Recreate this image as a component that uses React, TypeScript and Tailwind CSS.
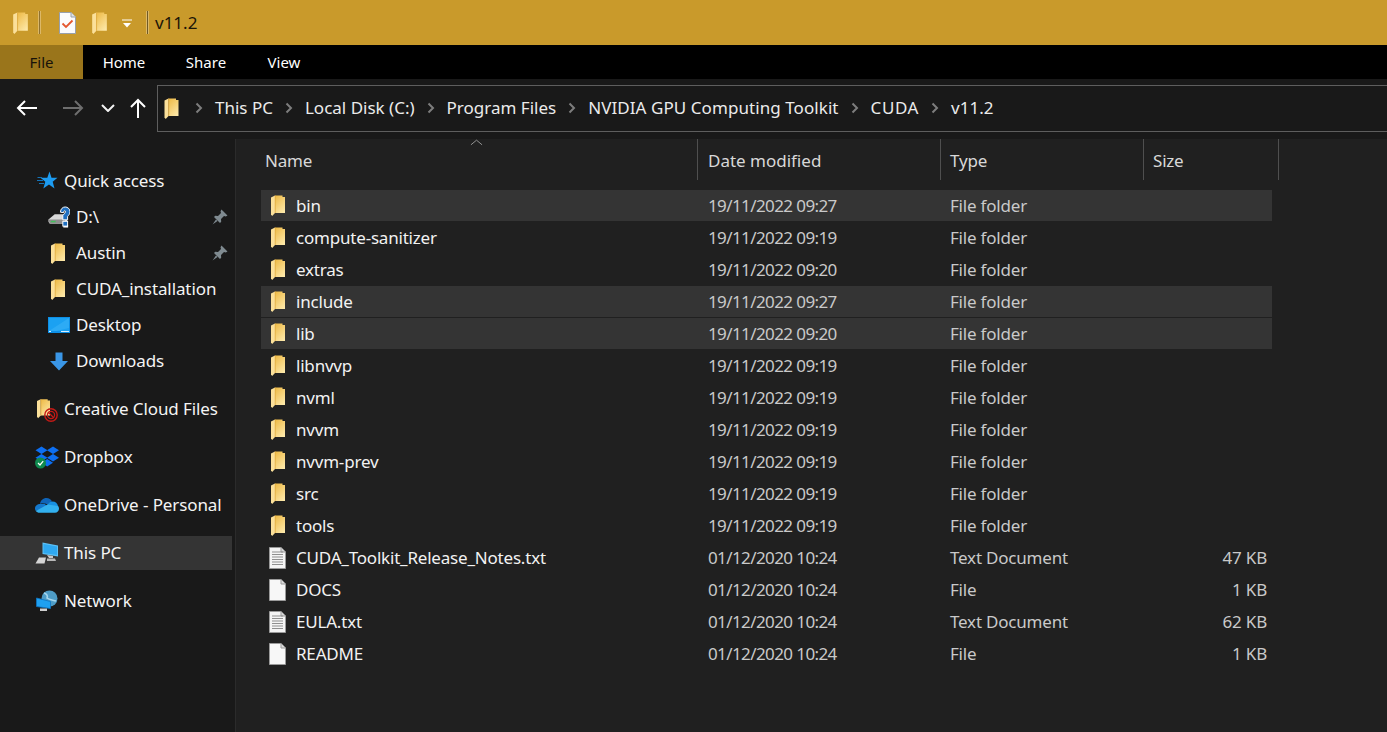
const FONT = "font-['Noto_Sans',sans-serif]";

function Folder({ className = "w-[14px] h-[21px]" }: { className?: string }) {
  return (
    <svg viewBox="0 0 14 21" className={className}>
      <defs>
        <linearGradient id="fold" x1="0.2" y1="0" x2="0.8" y2="1">
          <stop offset="0" stopColor="#efbd4c" />
          <stop offset="1" stopColor="#fde8a8" />
        </linearGradient>
      </defs>
      <path d="M4 0.5H11.5V2H14V18H4Z" fill="url(#fold)" />
      <path d="M0 2.5L4 0.5V18L1.2 21L0 19.5Z" fill="#fbe09a" />
      <path d="M4.2 0.5V18" fill="none" stroke="#dca63a" strokeWidth="0.7" />
    </svg>
  );
}

function TextFile() {
  return (
    <svg viewBox="0 0 17 22" className="w-[17px] h-[22px]">
      <path d="M0.5 0.5H12L16.5 5V21.5H0.5Z" fill="#f4f4f4" stroke="#9a9a9a" />
      <path d="M12 0.5V5H16.5" fill="#d8d8d8" stroke="#9a9a9a" />
      {[5, 7.5, 10, 12.5, 15, 17.5].map((y) => (
        <path key={y} d={`M3 ${y}H14`} stroke="#8f8f8f" strokeWidth="1" />
      ))}
    </svg>
  );
}

function BlankFile() {
  return (
    <svg viewBox="0 0 17 22" className="w-[17px] h-[22px]">
      <path d="M0.5 0.5H12L16.5 5V21.5H0.5Z" fill="#f7f7f7" stroke="#9a9a9a" />
      <path d="M12 0.5V5H16.5" fill="#dcdcdc" stroke="#9a9a9a" />
    </svg>
  );
}

function Pin() {
  return (
    <svg viewBox="0 0 16 16" className="w-4 h-4">
      <path d="M9.5 0.5L15.5 6.5L13.8 7.5L12 7L9 10L9.2 12.8L8 14L2 8L3.2 6.8L6 7L9 4L8.5 2.2Z" fill="#7f8a90" />
      <path d="M4 10.5L0.5 15.5L5.5 12Z" fill="#7f8a90" />
    </svg>
  );
}

function Star() {
  return (
    <svg viewBox="0 0 21 20" className="w-[21px] h-[20px]">
      <path d="M12.5 0.5L14.5 6.8H20.5L15.7 10.7L17.5 17.5L12 13.5L6.3 17.5L8.3 10.7L3.5 6.8H10.3Z" fill="#1d9bf0" />
      <path d="M0.5 6.5H5M0 9.5H6M2 12.5H7" stroke="#1473b8" strokeWidth="1" />
    </svg>
  );
}

function Drive() {
  return (
    <svg viewBox="0 0 23 22" className="w-[23px] h-[22px]">
      <path d="M0.5 13.5L7 8H20V15L18 18H2L0.5 16Z" fill="#d9d9d9" />
      <path d="M0.5 13.5H18V18H2Z" fill="#8e8e8e" />
      <rect x="3" y="15" width="5" height="1.5" fill="#42c05a" />
      <path d="M16 19.5H21V22H16Z" fill="#fff" />
      <path d="M13 6C13 2.5 15.5 0.5 18 0.5C20.5 0.5 23 2.5 23 5.5C23 8 21.5 9 20.5 10.5V14H15.5V9.5C16.5 8 18.2 7 18.2 5.3C18.2 4.4 17.2 4 16.6 5L16.5 6.5Z" fill="#1f6fc0" stroke="#fff" strokeWidth="1" />
      <rect x="15.5" y="15.5" width="5" height="5" fill="#1f6fc0" stroke="#fff" strokeWidth="1" />
    </svg>
  );
}

function DesktopIcon() {
  return (
    <svg viewBox="0 0 22 16" className="w-[22px] h-4">
      <rect x="0" y="0" width="22" height="16" fill="#0d8fe6" />
      <path d="M1 1H21V14H1Z" fill="#1ba1f2" />
      <path d="M21 1V11L8 14H1Z" fill="#3db5f7" opacity="0.55" />
      <path d="M1 14.5H3M13 14.5H21" stroke="#d8efff" strokeWidth="1" />
    </svg>
  );
}

function DownloadArrow() {
  return (
    <svg viewBox="0 0 18 19" className="w-[18px] h-[19px]">
      <path d="M5.5 0.5H12.5V9H18L9 18.5L0 9H5.5Z" fill="#3a96e6" />
    </svg>
  );
}

function CreativeCloud() {
  return (
    <div className="relative w-[20px] h-[23px]">
      <Folder className="w-[13px] h-[21px]" />
      <svg viewBox="0 0 14 14" className="absolute right-[-1px] bottom-[-1px] w-[14px] h-[14px]">
        <circle cx="7" cy="7" r="6.2" fill="none" stroke="#c41a16" strokeWidth="1.4" />
        <circle cx="7" cy="7" r="3.6" fill="none" stroke="#c41a16" strokeWidth="1.2" />
        <path d="M4 4L10 10" stroke="#c41a16" strokeWidth="1.2" />
      </svg>
    </div>
  );
}

function Dropbox() {
  return (
    <svg viewBox="0 0 24 23" className="w-6 h-[23px]">
      <path d="M6.5 0.5L12.5 4.2L6.5 8L0.5 4.2Z" fill="#0d6ff2" />
      <path d="M18 0.5L24 4.2L18 8L12 4.2Z" fill="#0d6ff2" />
      <path d="M6.5 8L12.5 11.8L6.5 15.5L0.5 11.8Z" fill="#0d6ff2" />
      <path d="M18 8L24 11.8L18 15.5L12 11.8Z" fill="#0d6ff2" />
      <path d="M12.2 13L18 16.8L12.2 20.5L6.5 16.8Z" fill="#0d6ff2" />
      <circle cx="5.5" cy="17" r="5.5" fill="#0f8a4f" />
      <path d="M3 17L5 19L8.2 15.2" fill="none" stroke="#fff" strokeWidth="1.2" />
    </svg>
  );
}

function OneDrive() {
  return (
    <svg viewBox="0 0 24 16" className="w-6 h-4">
      <path d="M5 7C5.5 3.5 8 1 11.5 1C14 1 16 2.2 17 4.5C15 5 13.5 6 12.5 7.5L9 6C7.5 6 6 6.3 5 7Z" fill="#0f64b8" />
      <path d="M12.5 7.5C13.5 5.5 15.5 4.5 17.5 4.5C20.5 4.5 22.5 6.5 23 9L15 11Z" fill="#1890e0" />
      <path d="M5 7C2 7 0 9.2 0 11.5C0 12.5 0.3 13.3 0.8 14L12.5 10L9.5 6.5Z" fill="#1478cc" />
      <path d="M0.8 14C1.7 15.2 3 15.8 4.5 15.8H20C22.2 15.8 24 14 24 11.8C24 10.5 23.6 9.6 23 9L12.5 7.5Z" fill="#32b0ee" />
    </svg>
  );
}

function ThisPc() {
  return (
    <svg viewBox="0 0 24 22" className="w-6 h-[22px]">
      <path d="M7.5 0.5L23 3.5V14.5L7.5 12Z" fill="#5cc0f5" />
      <path d="M8.5 2L22 4.5V13L8.5 11Z" fill="#2fa8f0" />
      <path d="M12 13L18 14V16H14Z" fill="#c8c8c8" />
      <path d="M4 15.5H11L9.5 21.5H0.5Z" fill="#d4d4d4" />
      <path d="M12 16.5H20L21 19H12Z" fill="#b8b8b8" />
    </svg>
  );
}

function NetworkIcon() {
  return (
    <svg viewBox="0 0 22 22" className="w-[22px] h-[22px]">
      <circle cx="13.5" cy="8.5" r="8" fill="#4e9cc6" />
      <path d="M8 3C11 4 12 6 11 8C13 10 17 10 20 11" fill="none" stroke="#a6d6ee" strokeWidth="1.6" />
      <path d="M0.5 8L14.5 11.5V18.5L0.5 16.5Z" fill="#1fa0f0" stroke="#0c74c2" strokeWidth="0.8" />
      <path d="M4 18.5H11V21H4Z" fill="#d0d0d0" />
    </svg>
  );
}

function CheckDoc() {
  return (
    <svg viewBox="0 0 17 22" className="w-[17px] h-[22px]">
      <path d="M0.5 0.5H12L16.5 5V21.5H0.5Z" fill="#fbfbfb" stroke="#98a0ac" />
      <path d="M12 0.5V5H16.5" fill="#dfe3e8" stroke="#98a0ac" />
      <path d="M3.5 11.5L7 15L13.5 8.5" fill="none" stroke="#e4572e" strokeWidth="1.8" />
    </svg>
  );
}

function NavItem({ icon, label, indent = false, pinned = false, active = false }: { icon: React.ReactNode; label: string; indent?: boolean; pinned?: boolean; active?: boolean }) {
  return (
    <div className={`h-9 flex items-center ${active ? "py-px" : ""}`}>
      <div className={`h-full w-full flex items-center ${active ? "bg-[#343434]" : ""}`}>
        <div className={`flex justify-center shrink-0 ${indent ? "ml-12 w-[22px] mr-[6px]" : "ml-[35px] w-6 mr-[5px]"}`}>{icon}</div>
        <span className="flex-1 text-[#f4f4f4] text-[17px] tracking-[-0.1px] whitespace-nowrap">{label}</span>
        {pinned && (
          <div className="mr-[4px]">
            <Pin />
          </div>
        )}
      </div>
    </div>
  );
}

type Row = { name: string; date: string; type: string; size?: string; kind: "folder" | "text" | "blank"; hi?: boolean };

const rows: Row[] = [
  { name: "bin", date: "19/11/2022 09:27", type: "File folder", kind: "folder", hi: true },
  { name: "compute-sanitizer", date: "19/11/2022 09:19", type: "File folder", kind: "folder" },
  { name: "extras", date: "19/11/2022 09:20", type: "File folder", kind: "folder" },
  { name: "include", date: "19/11/2022 09:27", type: "File folder", kind: "folder", hi: true },
  { name: "lib", date: "19/11/2022 09:20", type: "File folder", kind: "folder", hi: true },
  { name: "libnvvp", date: "19/11/2022 09:19", type: "File folder", kind: "folder" },
  { name: "nvml", date: "19/11/2022 09:19", type: "File folder", kind: "folder" },
  { name: "nvvm", date: "19/11/2022 09:19", type: "File folder", kind: "folder" },
  { name: "nvvm-prev", date: "19/11/2022 09:19", type: "File folder", kind: "folder" },
  { name: "src", date: "19/11/2022 09:19", type: "File folder", kind: "folder" },
  { name: "tools", date: "19/11/2022 09:19", type: "File folder", kind: "folder" },
  { name: "CUDA_Toolkit_Release_Notes.txt", date: "01/12/2020 10:24", type: "Text Document", size: "47 KB", kind: "text" },
  { name: "DOCS", date: "01/12/2020 10:24", type: "File", size: "1 KB", kind: "blank" },
  { name: "EULA.txt", date: "01/12/2020 10:24", type: "Text Document", size: "62 KB", kind: "text" },
  { name: "README", date: "01/12/2020 10:24", type: "File", size: "1 KB", kind: "blank" },
];

const crumbs = [
  { label: "This PC", cls: "" },
  { label: "Local Disk (C:)", cls: "" },
  { label: "Program Files", cls: "" },
  { label: "NVIDIA GPU Computing Toolkit", cls: "tracking-[0.07px]" },
  { label: "CUDA", cls: "tracking-[0.6px]" },
  { label: "v11.2", cls: "" },
];

function Chevron() {
  return (
    <svg viewBox="0 0 8 12" className="w-2 h-3 mx-[12px] shrink-0">
      <path d="M1.5 1.5L6 6L1.5 10.5" fill="none" stroke="#7d7d7d" strokeWidth="2" />
    </svg>
  );
}

export default function App() {
  return (
    <div className={`${FONT} w-[1387px] h-[732px] overflow-hidden flex flex-col bg-[#191919]`}>
      {/* Title bar */}
      <div className="h-[45px] bg-[#c99a2b] flex items-center pl-[13px]">
        <Folder className="w-[15px] h-[22px]" />
        <div className="w-px h-[23px] bg-[#8f7230] border-x border-[#dcb868] ml-[10px] box-content" />
        <div className="ml-[18px]">
          <CheckDoc />
        </div>
        <div className="ml-[16px]">
          <Folder className="w-[15px] h-[22px]" />
        </div>
        <svg viewBox="0 0 10 10" className="w-[10px] h-[10px] ml-[15px] mt-[3px]">
          <path d="M0 1H10" stroke="#fff" strokeWidth="1" />
          <path d="M1 4H9L5 8.5Z" fill="#fff" />
        </svg>
        <div className="w-px h-[23px] bg-[#6f5a25] border-x border-[#dcb868] ml-[14px] box-content" />
        <span className="ml-[6px] text-[#1b1508] text-[17px]">v11.2</span>
      </div>

      {/* Ribbon tabs */}
      <div className="h-[34px] bg-black flex text-white text-[15px]">
        <div className="w-[83px] bg-[#9a751b] text-[#17120a] flex items-center justify-center">File</div>
        <div className="w-[82px] flex items-center justify-center">Home</div>
        <div className="w-[82px] flex items-center justify-center">Share</div>
        <div className="w-[74px] flex items-center justify-center">View</div>
      </div>

      {/* Address row */}
      <div className="h-[60px] flex items-center shrink-0 pb-[2px] pl-[16px]">
        <div className="flex items-center w-[141px] shrink-0">
          <svg viewBox="0 0 22 18" className="w-[22px] h-[18px]">
            <path d="M21 9H2M9 2L2 9L9 16" fill="none" stroke="#fff" strokeWidth="2" />
          </svg>
          <svg viewBox="0 0 22 18" className="w-[22px] h-[18px] ml-[24px]">
            <path d="M1 9H20M13 2L20 9L13 16" fill="none" stroke="#6e6e6e" strokeWidth="2" />
          </svg>
          <svg viewBox="0 0 14 8" className="w-[14px] h-2 ml-[17px]">
            <path d="M1 1L7 7L13 1" fill="none" stroke="#f2f2f2" strokeWidth="2" />
          </svg>
          <svg viewBox="0 0 16 20" className="w-4 h-5 ml-[15px]">
            <path d="M8 20V2M1 9L8 2L15 9" fill="none" stroke="#fff" strokeWidth="2" />
          </svg>
        </div>
        <div className="flex-1 h-[47px] border border-[#5e5e5e] border-r-0 flex items-center pl-[6px] text-[#ebebeb] text-[17px]">
          <Folder className="w-[15px] h-[21px]" />
          <div className="ml-[4px] flex items-center">
            {crumbs.map((c) => (
              <div key={c.label} className="flex items-center whitespace-nowrap">
                <Chevron />
                <span className={c.cls}>{c.label}</span>
              </div>
            ))}
          </div>
        </div>
      </div>

      <div className="flex-1 flex min-h-0">
        {/* Navigation pane */}
        <div className="w-[236px] shrink-0 pr-[3px] border-r border-[#2b2b2b] pt-[24px] flex flex-col gap-3">
          <div>
            <NavItem icon={<Star />} label="Quick access" />
            <NavItem icon={<Drive />} label="D:\" indent pinned />
            <NavItem icon={<Folder className="w-[14px] h-[21px] -ml-[2px]" />} label="Austin" indent pinned />
            <NavItem icon={<Folder className="w-[14px] h-[21px] -ml-[2px]" />} label="CUDA_installation" indent />
            <NavItem icon={<DesktopIcon />} label="Desktop" indent />
            <NavItem icon={<DownloadArrow />} label="Downloads" indent />
          </div>
          <NavItem icon={<CreativeCloud />} label="Creative Cloud Files" />
          <NavItem icon={<Dropbox />} label="Dropbox" />
          <NavItem icon={<OneDrive />} label="OneDrive - Personal" />
          <NavItem icon={<ThisPc />} label="This PC" active />
          <NavItem icon={<NetworkIcon />} label="Network" />
        </div>

        {/* File list */}
        <div className="flex-1 bg-[#202020] text-[17px] tracking-[-0.2px]">
          <div className="relative h-[41px] flex text-[#d8d8d8] items-end">
            <svg viewBox="0 0 14 7" className="absolute left-[234px] top-0 w-[13px] h-[7px]">
              <path d="M1 6L7 1L13 6" fill="none" stroke="#9a9a9a" strokeWidth="1" />
            </svg>
            <div className="h-[41px] w-[462px] pl-[29px] pt-[2px] flex items-center border-r border-[#4f4f4f]">Name</div>
            <div className="h-[41px] w-[243px] pl-[10px] pt-[2px] flex items-center border-r border-[#4f4f4f] tracking-normal">Date modified</div>
            <div className="h-[41px] w-[203px] pl-[9px] pt-[2px] flex items-center border-r border-[#4f4f4f]">Type</div>
            <div className="h-[41px] w-[135px] pl-[9px] pt-[2px] flex items-center border-r border-[#4f4f4f]">Size</div>
          </div>
          <div className="pt-[10px] pl-[25px]">
            {rows.map((r) => (
              <div key={r.name} className="h-8 w-[1011px] flex items-start">
                <div className={`flex items-center w-[436px] h-[31px] ${r.hi ? "bg-[#343434]" : ""} pl-2`}>
                  <div className="w-[17px] flex justify-center shrink-0">
                    {r.kind === "folder" ? <Folder /> : r.kind === "text" ? <TextFile /> : <BlankFile />}
                  </div>
                  <span className="ml-[10px] pt-px text-[#f2f2f2] whitespace-nowrap">{r.name}</span>
                </div>
                <div className={`flex items-center flex-1 h-[31px] ${r.hi ? "bg-[#343434]" : ""} text-[#c9c9c9] whitespace-nowrap`}>
                  <span className="w-[243px] pl-[11px] pt-px tracking-[-0.6px]">{r.date}</span>
                  <span className="w-[203px] pl-[10px] pt-px">{r.type}</span>
                  <span className="flex-1 text-right pr-[5px] pt-px">{r.size}</span>
                </div>
              </div>
            ))}
          </div>
        </div>
      </div>
    </div>
  );
}
